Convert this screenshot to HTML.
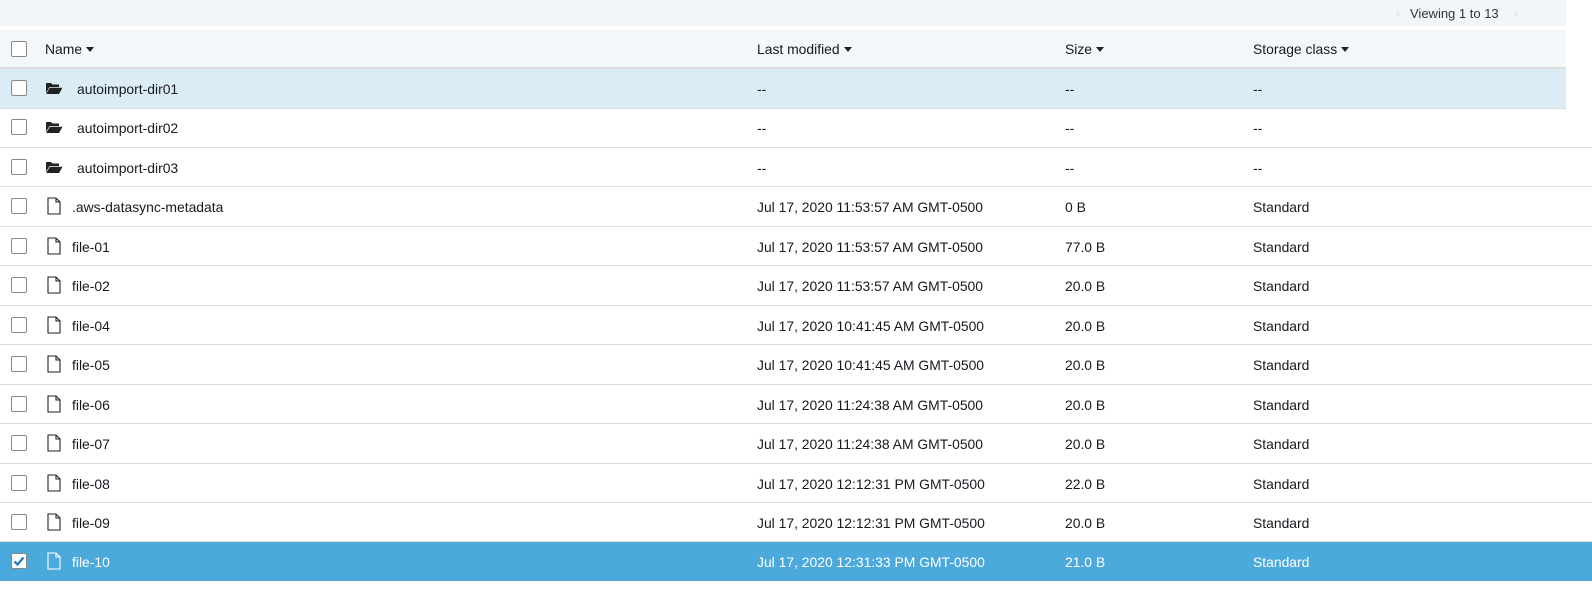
<!DOCTYPE html>
<html><head><style>
body{margin:0;width:1592px;height:593px;background:#fff;font-family:"Liberation Sans",Arial,sans-serif;font-size:13.9px;color:#16191f;position:relative;overflow:hidden}
.top{position:absolute;left:0;top:0;width:1566px;height:26px;background:#f2f6f8}
.top span{position:absolute;left:1410px;top:6px;color:#333;font-size:13px}
.top i{position:absolute;top:5px;color:#ddd;font-style:normal;font-size:13px}
.hdr{position:absolute;left:0;top:30px;width:1566px;height:37px;background:#f4f7f9;border-bottom:2px solid #dcdcdc}
.row{position:absolute;left:0;width:1592px;height:38.5px;border-bottom:1px solid #ddd}
.cb{position:absolute;left:11px;width:14px;height:14px;border:1px solid #888;border-radius:2px;background:#fff}
.c{position:absolute;white-space:nowrap}
.ar{display:inline-block;width:0;height:0;border-left:4.5px solid transparent;border-right:4.5px solid transparent;border-top:5px solid #222;vertical-align:2px;margin-left:4px}
.sel{background:#4ca9dc;color:#fff}
</style></head><body>
<div class="top"><i style="left:1396px">‹</i><span>Viewing 1 to 13</span><i style="left:1514px">›</i></div>
<div class="hdr">
<div class="cb" style="top:11px"></div>
<div class="c" style="left:45px;top:11px">Name<span class="ar"></span></div>
<div class="c" style="left:757px;top:11px">Last modified<span class="ar"></span></div>
<div class="c" style="left:1065px;top:11px">Size<span class="ar"></span></div>
<div class="c" style="left:1253px;top:11px">Storage class<span class="ar"></span></div>
</div>
<div id="rows"></div>
<script>
var d=[["autoimport-dir01","--","--","--",1],["autoimport-dir02","--","--","--",1],["autoimport-dir03","--","--","--",1],
[".aws-datasync-metadata","Jul 17, 2020 11:53:57 AM GMT-0500","0 B","Standard"],
["file-01","Jul 17, 2020 11:53:57 AM GMT-0500","77.0 B","Standard"],
["file-02","Jul 17, 2020 11:53:57 AM GMT-0500","20.0 B","Standard"],
["file-04","Jul 17, 2020 10:41:45 AM GMT-0500","20.0 B","Standard"],
["file-05","Jul 17, 2020 10:41:45 AM GMT-0500","20.0 B","Standard"],
["file-06","Jul 17, 2020 11:24:38 AM GMT-0500","20.0 B","Standard"],
["file-07","Jul 17, 2020 11:24:38 AM GMT-0500","20.0 B","Standard"],
["file-08","Jul 17, 2020 12:12:31 PM GMT-0500","22.0 B","Standard"],
["file-09","Jul 17, 2020 12:12:31 PM GMT-0500","20.0 B","Standard"],
["file-10","Jul 17, 2020 12:31:33 PM GMT-0500","21.0 B","Standard"]];
var h="";
d.forEach(function(r,i){
var top=69+i*39.45;var sel=i==12;var st="top:"+top+"px;";
if(i==0)st+="background:#dcecf6;width:1566px;";
if(sel)st+="border-bottom:none;";
h+='<div class="row'+(sel?' sel':'')+'" style="'+st+'">';
h+='<div class="cb" style="top:11px">'+(sel?'<svg width="14" height="14" viewBox="0 0 14 14" style="position:absolute;left:0;top:0"><path d="M2.5 7.5l3 3 6-7" stroke="#2a7fc0" stroke-width="2.4" fill="none"/></svg>':'')+'</div>';
var col=sel?"#fff":"#222";
if(r[4]){
h+='<svg class="c" style="left:45px;top:12px" width="18" height="14" viewBox="0 0 18 14"><path d="M1 2h5l1.5 1.5H14V6H4.5L1 12z" fill="#222"/><path d="M4.8 6.8H17.5L14 13H1.2z" fill="#222"/></svg>';
h+='<div class="c" style="left:77px;top:12px">'+r[0]+'</div>';
}else{
h+='<svg class="c" style="left:47px;top:10px" width="14" height="18" viewBox="0 0 14 18"><path d="M1 1h8l4 4v12H1z M9 1v4h4" stroke="'+col+'" stroke-width="1.1" fill="none"/></svg>';
h+='<div class="c" style="left:72px;top:12px">'+r[0]+'</div>';
}
h+='<div class="c" style="left:757px;top:12px">'+r[1]+'</div><div class="c" style="left:1065px;top:12px">'+r[2]+'</div><div class="c" style="left:1253px;top:12px">'+r[3]+'</div></div>';
});
document.getElementById("rows").innerHTML=h;
</script>
</body></html>
